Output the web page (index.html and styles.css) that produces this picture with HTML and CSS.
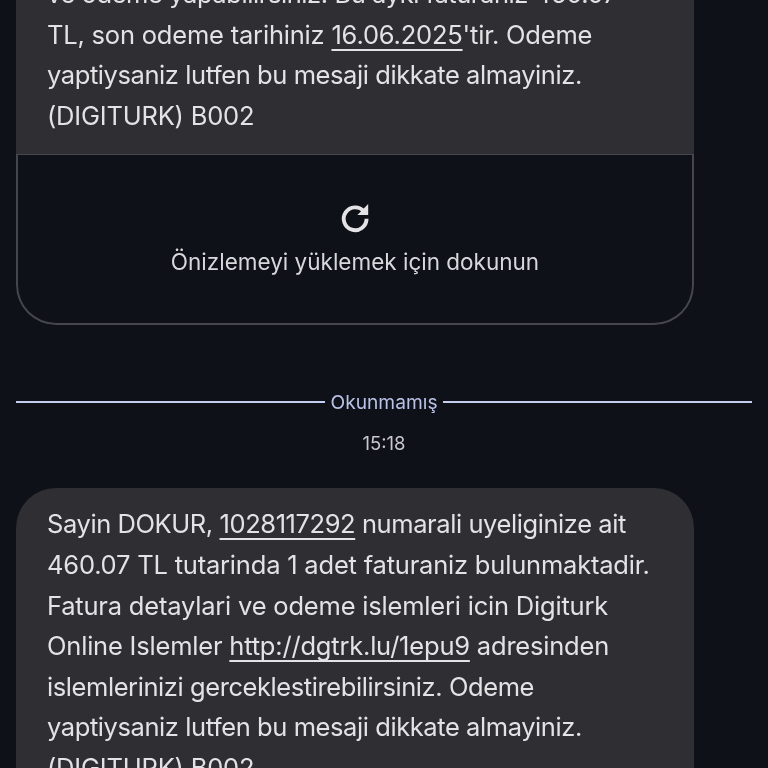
FILE: index.html
```html
<!DOCTYPE html>
<html lang="tr">
<head>
<meta charset="utf-8">
<title>Mesajlar</title>
<link rel="stylesheet" href="styles.css">
</head>
<body>
<main class="thread">
  <article class="message message-first">
    <div class="bubble-text">
      <p class="line tight">ve odeme yapabilirsiniz. Bu ayki faturaniz 460.07</p>
      <p class="line">TL, son odeme tarihiniz <span class="link">16.06.2025</span>'tir. Odeme</p>
      <p class="line tight">yaptiysaniz lutfen bu mesaji dikkate almayiniz.</p>
      <p class="line">(DIGITURK) B002</p>
    </div>
    <button class="preview" type="button">
      <svg class="reload" viewBox="0 0 24 24" width="36" height="36" aria-hidden="true">
        <path d="M18 8.4A7.6 7.6 0 1 0 19.7 13.2" fill="none" stroke="currentColor" stroke-width="2.6"/>
        <path d="M20.8 3.4v7.2h-7.2z" fill="currentColor"/>
      </svg>
      <span class="preview-label">Önizlemeyi yüklemek için dokunun</span>
    </button>
  </article>
  <div class="unread"><span class="unread-label">Okunmamış</span></div>
  <div class="time">15:18</div>
  <article class="message message-last">
    <div class="bubble-text">
      <p class="line tight">Sayin DOKUR, <span class="link">1028117292</span> numarali uyeliginize ait</p>
      <p class="line">460.07 TL tutarinda 1 adet faturaniz bulunmaktadir.</p>
      <p class="line">Fatura detaylari ve odeme islemleri icin Digiturk</p>
      <p class="line">Online Islemler <span class="link">http://dgtrk.lu/1epu9</span> adresinden</p>
      <p class="line tight">islemlerinizi gerceklestirebilirsiniz. Odeme</p>
      <p class="line tight">yaptiysaniz lutfen bu mesaji dikkate almayiniz.</p>
      <p class="line">(DIGITURK) B002</p>
    </div>
  </article>
</main>
</body>
</html>
```
FILE: styles.css
```css
* { box-sizing: border-box; }
html, body { margin: 0; height: 768px; overflow: hidden; background: #0f1119; }
body { font-family: Inter, "Noto Sans", sans-serif; color: #e3e3e6; }
.thread { display: flex; flex-direction: column; margin-top: -47px; padding: 0 16px; filter: blur(0.35px); }
.message { width: 678px; background: #2e2e33; overflow: hidden; flex: none; }
.message-first { border-radius: 0 0 40px 40px; }
.message-last { margin-top: 30px; border-radius: 40px 40px 0 0; }
.bubble-text { padding: 21px 31px 18px; }
.message-last .bubble-text { padding-top: 16px; padding-bottom: 0; }
.line { margin: 0; font-size: 25.5px; line-height: 40.6px; white-space: nowrap; letter-spacing: -0.2px; }
.tight { letter-spacing: -0.42px; }
.link { text-decoration: underline; text-decoration-thickness: 2px; text-underline-offset: 5px; text-decoration-skip-ink: none; }
.preview { display: flex; flex-direction: column; align-items: center; width: 100%; height: 171px; padding: 44px 0 0; background: #0f1119; color: #e3e3e6; border: 2px solid #45464d; border-top-width: 1px; border-radius: 0 0 40px 40px; font: inherit; }
.reload { display: block; flex: none; }
.preview-label { margin-top: 9px; font-size: 22.5px; line-height: 36px; color: #d8d8dc; }
.unread { display: flex; align-items: center; gap: 5px; margin-top: 62px; height: 30px; color: #b9c2e6; font-size: 19.2px; }
.unread::before, .unread::after { content: ""; flex: 1; height: 2px; background: #c5cdf0; }
.time { margin-top: 11px; text-align: center; color: #c8c8cd; font-size: 18.5px; line-height: 30px; }
```
